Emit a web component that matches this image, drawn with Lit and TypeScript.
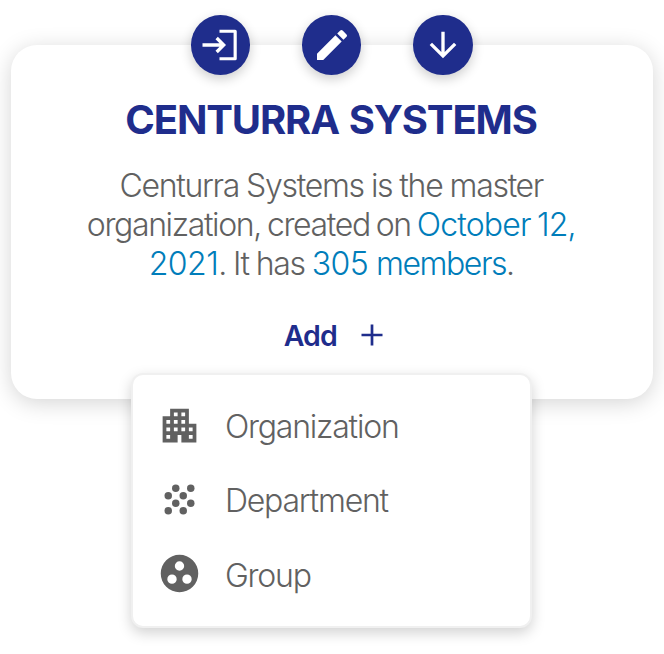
import { LitElement, html, css, svg } from "lit";
import { customElement } from "lit/decorators.js";

const icons = {
  login: svg`<path d="M11.7 3.75H21.1V20.25H11.7" fill="none" stroke="currentColor" stroke-width="1.9" stroke-linejoin="round"/><path d="M1.5 12H14M10 7.8L14.2 12L10 16.2" fill="none" stroke="currentColor" stroke-width="2"/>`,
  edit: svg`<path d="M3 17.25V21h3.75L17.81 9.94l-3.75-3.75L3 17.25zM20.71 7.04a1 1 0 0 0 0-1.41l-2.34-2.34a1 1 0 0 0-1.41 0l-1.83 1.83 3.75 3.75 1.83-1.83z"/>`,
  down: svg`<path d="M20 12l-1.41-1.41L13 16.17V4h-2v12.17l-5.58-5.59L4 12l8 8 8-8z"/>`,
  plus: svg`<path d="M19 12.9h-6.1v6.1h-1.8v-6.1H5v-1.8h6.1V5h1.8v6.1H19z"/>`,
  organization: svg`<path fill-rule="evenodd" d="M17 11V3H7v4H3v14h8v-4h2v4h8V11zM7 19H5v-2h2zM7 15H5v-2h2zM7 11H5V9h2zM11 15H9v-2h2zM11 11H9V9h2zM11 7H9V5h2zM15 15h-2v-2h2zM15 11h-2V9h2zM15 7h-2V5h2zM19 19h-2v-2h2zM19 15h-2v-2h2z"/>`,
  department: svg`${[[10, 6], [18, 6], [6, 10], [14, 10], [10, 14], [18, 14], [6, 18], [14, 18]].map(
    ([x, y]) => svg`<circle cx=${x} cy=${y} r="2"/>`)}`,
  group: svg`<path fill-rule="evenodd" d="M12 2a10 10 0 1 0 0 20a10 10 0 1 0 0-20zM8 17.5a2.5 2.5 0 1 1 0-5a2.5 2.5 0 1 1 0 5zM9.5 8a2.5 2.5 0 1 1 5 0a2.5 2.5 0 1 1-5 0zM16 17.5a2.5 2.5 0 1 1 0-5a2.5 2.5 0 1 1 0 5z"/>`,
};

const icon = (name: keyof typeof icons) =>
  html`<svg class="icon" viewBox="0 0 24 24" fill="currentColor">${icons[name]}</svg>`;

@customElement("app-root")
export class AppRoot extends LitElement {
  static styles = css`
    :host {
      display: block;
      box-sizing: border-box;
      height: 654px;
      padding: 45px 11px 0;
      overflow: hidden;
      background: #fff;
      font-family: Inter, "Liberation Sans", sans-serif;
      color: #616161;
    }
    .icon { display: block; flex: none; width: 100%; height: 100%; overflow: visible; }
    .card {
      display: flex;
      flex-direction: column;
      align-items: center;
      box-sizing: border-box;
      height: 354px;
      width: 641.5px;
      border-radius: 26px;
      background: #fff;
      box-shadow: 0 4px 22px rgba(0, 0, 0, 0.17);
    }
    .actions { display: flex; gap: 52px; margin-top: -30px; }
    .action {
      display: flex;
      align-items: center;
      justify-content: center;
      width: 59.3px;
      height: 60px;
      padding: 0;
      border: 0;
      border-radius: 50%;
      background: #1f2d8c;
      color: #fff;
      box-shadow: 0 4px 12px rgba(0, 0, 0, 0.2);
    }
    .action .icon { width: 40px; height: 40px; }
    h1 {
      margin: 21px 1.5px 0 0;
      font-size: 40px;
      line-height: 48px;
      font-weight: 650;
      letter-spacing: -1.15px;
      word-spacing: 1.5px;
      color: #1f2d8c;
      white-space: nowrap;
    }
    p {
      margin: 22px 1px 0 0;
      font-size: 32px;
      line-height: 39px;
      font-weight: 300;
      text-align: center;
      letter-spacing: -1.3px;
      white-space: nowrap;
    }
    .line { display: block; }
    .l1 { word-spacing: -0.6px; }
    .l2 { word-spacing: -1.7px; letter-spacing: -1.36px; }
    .l3 { word-spacing: -0.8px; }
    a { color: #007dba; }
    .l2 a { letter-spacing: -0.85px; }
    .l3 a { letter-spacing: -1.45px; }
    .l3 .num { letter-spacing: -0.5px; }
    .add {
      display: flex;
      align-items: center;
      gap: 17px;
      margin: 33px 0 0 10px;
      padding: 0;
      border: 0;
      background: none;
      font: 600 28.5px/40px Inter, sans-serif;
      letter-spacing: -0.9px;
      color: #1f2d8c;
    }
    .add .icon { width: 36px; height: 36px; margin-bottom: 2px; }
    .menu {
      position: absolute;
      left: 131px;
      top: 373px;
      box-sizing: border-box;
      width: 401px;
      height: 255px;
      padding: 14.5px 24px;
      border: 2px solid #f0f0f0;
      border-radius: 12px;
      background: #fff;
      box-shadow: 0 5px 14px rgba(0, 0, 0, 0.18);
    }
    .item {
      display: flex;
      align-items: center;
      gap: 23px;
      height: 74.3px;
      font-size: 32px;
      font-weight: 300;
      letter-spacing: -1.22px;
    }
    .item .icon { width: 45px; height: 45px; margin-bottom: 3px; }
  `;

  render() {
    return html`
      <section class="card">
        <div class="actions">
          <button class="action" aria-label="Open">${icon("login")}</button>
          <button class="action" aria-label="Edit">${icon("edit")}</button>
          <button class="action" aria-label="Move down">${icon("down")}</button>
        </div>
        <h1>CENTURRA SYSTEMS</h1>
        <p>
          <span class="line l1">Centurra Systems is the master</span>
          <span class="line l2">organization, created on <a>October 12,</a></span>
          <span class="line l3"><a><span class="num">2021</span></a>. It has <a><span class="num">305 </span>members</a>.</span>
        </p>
        <button class="add"><span>Add</span>${icon("plus")}</button>
      </section>
      <div class="menu">
        <div class="item">${icon("organization")}<span>Organization</span></div>
        <div class="item">${icon("department")}<span>Department</span></div>
        <div class="item">${icon("group")}<span>Group</span></div>
      </div>
    `;
  }
}
